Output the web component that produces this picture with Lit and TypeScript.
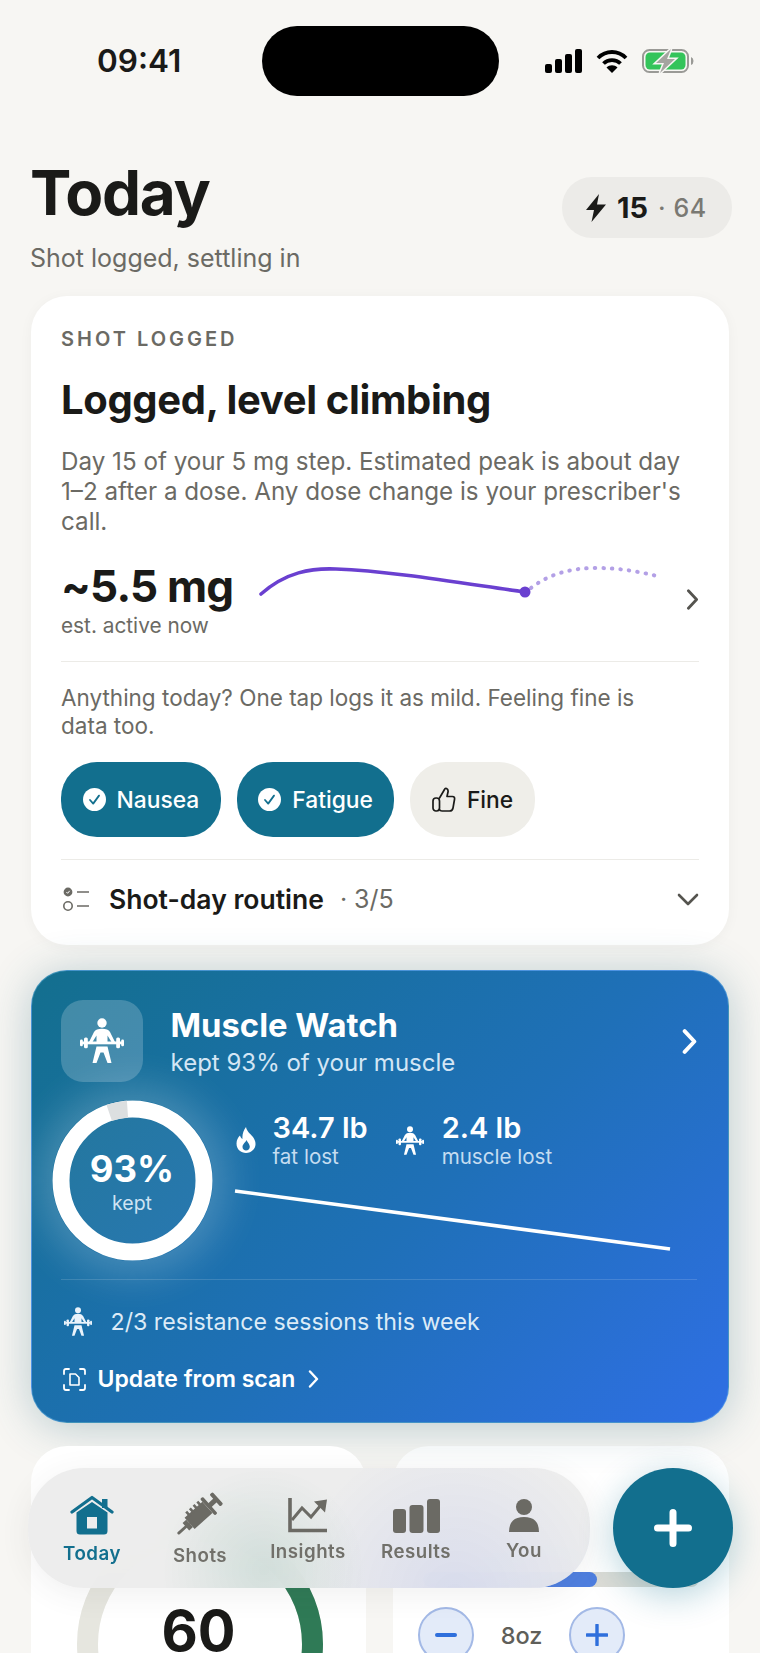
import {LitElement, html, css} from 'lit';
import {customElement} from 'lit/decorators.js';

const lifter = (w: number, c = '#fff', cls = '') => html`<svg class=${cls} width=${w} viewBox="0 0 44 46" fill=${c} stroke="none">
  <circle cx="22" cy="5" r="4.7"></circle>
  <path d="M9 24 L14 14 Q16 10.8 22 10.8 Q28 10.8 30 14 L35 24 H31.5 L27.5 17.5 V24 H16.5 V17.5 L12.5 24 Z"></path>
  <rect x="2" y="23.5" width="40" height="2.8"></rect>
  <rect x="0" y="21.5" width="2.8" height="6.8" rx="1.2"></rect>
  <rect x="4" y="19.5" width="3.8" height="10.8" rx="1.5"></rect>
  <rect x="36.2" y="19.5" width="3.8" height="10.8" rx="1.5"></rect>
  <rect x="41.2" y="21.5" width="2.8" height="6.8" rx="1.2"></rect>
  <path d="M16.5 28.6 H27.5 L31.5 45 H27.5 L23.5 34.5 H20.5 L16.5 45 H12.5Z"></path>
</svg>`;

const chevron = (w: number, h: number, c: string, sw: number) => html`<svg width=${w} height=${h} viewBox="0 0 10 18" fill="none" stroke=${c} stroke-width=${sw} stroke-linecap="round" stroke-linejoin="round"><path d="M1.5 1.5 L8.5 9 L1.5 16.5"></path></svg>`;

const check = html`<svg class="chk" width="23" height="23" viewBox="0 0 23 23"><circle cx="11.5" cy="11.5" r="11.5" fill="#fff"></circle><path d="M7 12 L10.2 15.6 L16 7.6" fill="none" stroke="#126f8e" stroke-width="1.8" stroke-linecap="round" stroke-linejoin="round"></path></svg>`;

const tabs = [
  {label: 'Today', cls: 'on', icon: html`<svg width="44" height="40" viewBox="0 0 44 40">
    <rect x="32" y="4" width="5.5" height="9" fill="#126f8e"></rect>
    <path d="M2 17 L22 2.5 L42 17" fill="none" stroke="#126f8e" stroke-width="3.2" stroke-linecap="round" stroke-linejoin="round"></path>
    <path fill-rule="evenodd" fill="#126f8e" d="M6.5 17.5 L22 7 L37.5 17.5 V36 Q37.5 39.5 34 39.5 H10 Q6.5 39.5 6.5 36Z M17 22 V33.5 H27 V22Z"></path>
  </svg>`},
  {label: 'Shots', cls: 'shots', icon: html`<svg width="46" height="44" viewBox="0 0 46 44">
    <g transform="rotate(-42 23 22)" fill="#6b6a64">
      <rect x="-7" y="20.6" width="16" height="2.8" rx="1.4"></rect>
      <path d="M4 17 H9 V27 H4Z"></path>
      <path d="M9 14.5 H33 V29.5 H9Z"></path>
      <rect x="13" y="11" width="2.6" height="6"></rect><rect x="18" y="11" width="2.6" height="6"></rect><rect x="23" y="11" width="2.6" height="6"></rect><rect x="28" y="11" width="2.6" height="6"></rect>
      <rect x="33" y="11" width="3.6" height="22" rx="1.2"></rect>
      <rect x="36" y="19.5" width="8" height="5"></rect>
      <rect x="43" y="14" width="4" height="16" rx="1.4"></rect>
    </g>
  </svg>`},
  {label: 'Insights', cls: 'ins', icon: html`<svg width="42" height="36" viewBox="0 0 42 36" fill="none" stroke="#6b6a64">
    <path d="M3 1 V33.5 H40" stroke-width="3.6"></path>
    <path d="M5 23 L15 11 L24 20 L34 8" stroke-width="3"></path>
    <path d="M27 4.5 L40 2.5 L38 15.5Z" fill="#6b6a64" stroke="none"></path>
  </svg>`},
  {label: 'Results', cls: 'res', icon: html`<svg width="47" height="34" viewBox="0 0 47 34" fill="#6b6a64">
    <rect x="0" y="10" width="13" height="24" rx="3"></rect>
    <rect x="16.5" y="6" width="14" height="28" rx="3"></rect>
    <rect x="34" y="0" width="13" height="34" rx="3"></rect>
  </svg>`},
  {label: 'You', cls: 'you', icon: html`<svg width="30" height="33" viewBox="0 0 30 33" fill="#6b6a64">
    <circle cx="15" cy="8" r="8"></circle>
    <path d="M0 33 Q0 18 15 18 Q30 18 30 33Z"></path>
  </svg>`},
];

const progress = 63;

@customElement('app-root')
export class AppRoot extends LitElement {
  static styles = css`
    :host {
      display: block;
      position: relative;
      width: 760px;
      height: 1653px;
      overflow: hidden;
      background: #f7f6f3;
      font-family: Inter, 'Liberation Sans', sans-serif;
      color: #1a1a18;
    }
    svg { display: block; flex: none; }

    .status { display: flex; align-items: center; height: 70px; padding: 26px 0 0 97px; }
    .time { width: 165px; font-size: 31.5px; font-weight: 600; line-height: 70px; }
    .island { width: 237px; height: 70px; border-radius: 35px; background: #000; }
    .sys { display: flex; align-items: center; margin-left: 46px; }
    .sys .wifi { margin-left: 14px; }
    .sys .batt { margin-left: 14px; }

    .head { display: flex; justify-content: space-between; padding: 61px 28px 0 30px; }
    h1 { margin: 0; font-size: 62px; line-height: 72px; font-weight: 700; letter-spacing: -1.3px; }
    .sub { margin-top: 14px; font-size: 25px; line-height: 30px; color: #6b6a64; }
    .badge { display: flex; align-items: center; height: 61px; width: 170px; margin-top: 20px; padding-left: 24px; box-sizing: border-box; border-radius: 30px; background: #ecebe8; font-size: 29px; font-weight: 600; }
    .badge b { margin-left: 11px; font-weight: 700; }
    .badge span { margin-left: 10px; font-size: 25px; font-weight: 500; color: #7a7973; letter-spacing: .6px; }

    .cards { padding: 23px 31px 0; }
    .card1 { height: 649px; box-sizing: border-box; padding: 31px 30px 0; border-radius: 36px; background: #fff; box-shadow: 0 2px 14px rgba(60, 60, 50, .04); }
    .eyebrow { font-size: 20px; line-height: 24px; font-weight: 600; letter-spacing: 3px; color: #6b6a64; }
    h2 { margin: 25px 0 0; font-size: 40px; line-height: 48px; font-weight: 700; letter-spacing: -.35px; }
    .para { margin-top: 23px; font-size: 24.2px; line-height: 30px; color: #6b6a64; }
    .active { display: flex; margin-top: 23px; height: 102px; border-bottom: 1px solid #ecebe7; box-sizing: border-box; }
    .val { width: 198px; flex: none; }
    .val strong { display: block; margin-top: -1px; font-size: 44px; line-height: 54px; font-weight: 700; letter-spacing: -.8px; white-space: nowrap; }
    .val small { display: block; font-size: 20.8px; line-height: 26px; color: #6b6a64; }
    .active .go { margin: 29px 0 0 21px; }
    .ask { margin-top: 22px; padding-right: 40px; font-size: 22.5px; line-height: 28px; color: #6b6a64; }
    .chips { display: flex; gap: 16px; margin-top: 22px; padding-bottom: 22px; border-bottom: 1px solid #ecebe7; }
    .chip { display: flex; align-items: center; gap: 11px; height: 75px; padding: 0 21.5px; box-sizing: border-box; border-radius: 36px; background: #126f8e; color: #fff; font-size: 22.8px; font-weight: 500; }
    .chip.off { background: #efeee9; color: #1a1a18; }
    .routine { display: flex; align-items: center; height: 78px; font-size: 26.5px; font-weight: 600; }
    .routine .txt { margin-left: 18px; }
    .routine .cnt { margin-left: 16px; font-size: 25px; font-weight: 400; color: #6b6a64; }
    .routine .down { margin-left: auto; margin-right: 0; }

    .muscle { position: relative; height: 453px; box-sizing: border-box; margin-top: 25px; padding: 29px 31px 0 28.5px; border-radius: 36px; border: 1.5px solid rgba(120, 190, 235, .45); background: linear-gradient(135deg, #136f8e 0%, #1f70b8 55%, #2f6fe4 100%); color: #fff; box-shadow: 0 4px 44px rgba(40, 100, 120, .3); }
    .mtop { display: flex; }
    .tile { display: flex; align-items: center; justify-content: center; width: 82px; height: 82px; border-radius: 22px; background: rgba(255, 255, 255, .2); }
    .mhead { margin-left: 28px; }
    .mhead h3 { margin: 0; padding-top: 5px; font-size: 32.8px; line-height: 40px; font-weight: 700; }
    .mhead p { margin: 0; padding-top: 2px; font-size: 24px; line-height: 32px; color: #d4e6f5; }
    .mtop .go { margin: 29px 0 0 auto; }
    .mid { display: flex; margin: 18px 0 0 -9px; }
    .ring { position: relative; width: 161px; height: 161px; flex: none; border-radius: 50%; box-shadow: 0 0 40px 14px rgba(255, 255, 255, .2); }
    .ring svg { position: absolute; inset: 0; }
    .ring .in { position: absolute; inset: 0; display: flex; flex-direction: column; align-items: center; justify-content: center; }
    .ring b { font-size: 36.5px; line-height: 46px; font-weight: 700; margin-top: -2px; }
    .ring span { font-size: 19.5px; line-height: 22px; color: #cfe3f3; }
    .stats { flex: 1; margin-left: 21px; padding-top: 11px; }
    .row { display: flex; }
    .stat { display: flex; align-items: flex-start; }
    .stat svg.fl { margin: 16px 17px 0 2px; }
    .stat svg.li { margin: 15px 18px 0 0; }
    .stat.two { margin-left: 28px; }
    .stat b { display: block; font-size: 29px; line-height: 34px; font-weight: 600; white-space: nowrap; }
    .stat span { display: block; font-size: 20.6px; line-height: 24px; color: #c5ddf1; white-space: nowrap; }
    .trend { margin: 20px 0 0 0; }
    .sep { height: 1px; margin-top: 18px; background: rgba(255, 255, 255, .14); }
    .sessions { display: flex; align-items: center; margin-top: 26px; font-size: 23.2px; line-height: 32px; color: #dcebf7; }
    .sessions svg { margin: 0 19px 0 3px; }
    .scan { display: flex; align-items: center; margin-top: 26px; font-size: 23px; line-height: 30px; font-weight: 600; }
    .scan svg.sc { margin: 0 12px 0 2px; }
    .scan svg.go { margin-left: 13px; }

    .lower { display: grid; grid-template-columns: 335px 336px; gap: 27px; margin-top: 23px; }
    .mini { height: 300px; box-sizing: border-box; border-radius: 36px; background: #fff; }
    .score { position: relative; padding: 75px 0 0 46px; }
    .score .num { position: absolute; left: 0; right: 0; top: 152px; text-align: center; font-size: 56px; line-height: 66px; font-weight: 700; }
    .water { padding: 126px 30px 0; }
    .track { height: 15px; border-radius: 8px; background: #dcdcd6; overflow: hidden; }
    .fill { height: 100%; border-radius: 8px; background: #4f7fe0; }
    .amt { display: flex; align-items: center; margin: 20px 0 0 -5px; }
    .amt .b { display: flex; align-items: center; justify-content: center; width: 56px; height: 56px; box-sizing: border-box; border-radius: 50%; border: 2px solid #a3b9e6; background: #e3ebf9; }
    .amt .oz { width: 95px; text-align: center; font-size: 23.5px; font-weight: 500; color: #5f5f5a; }

    .nav { position: absolute; left: 28px; top: 1468px; display: flex; width: 562px; height: 120px; box-sizing: border-box; padding-left: 10px; border-radius: 56px; background: radial-gradient(circle at 42% 85%, rgba(206, 220, 216, .85), rgba(206, 220, 216, 0) 30%), radial-gradient(circle at 76% 105%, rgba(212, 216, 236, .8), rgba(212, 216, 236, 0) 36%), rgba(236, 236, 236, .93); backdrop-filter: blur(30px); box-shadow: 0 6px 30px rgba(60, 70, 70, .08); }
    .tab { display: flex; flex-direction: column; align-items: center; width: 108px; height: 120px; box-sizing: border-box; font-size: 18.7px; line-height: 24px; font-weight: 600; letter-spacing: .5px; color: #71706a; }
    .tab svg { flex: none; }
    .tab .ic { display: flex; align-items: flex-end; justify-content: center; height: 36px; margin-bottom: 7px; }
    .tab.on { padding-top: 27px; color: #126f8e; }
    .tab.shots { padding-top: 24px; }
    .tab.shots .ic { height: 44px; margin-bottom: 8px; }
    .tab.ins { padding-top: 29px; }
    .tab.res { padding-top: 29px; }
    .tab.you { padding-top: 28px; }
    .tab.on .ic { height: 40px; margin-bottom: 7px; }
    .fab { position: absolute; left: 613px; top: 1468px; display: flex; align-items: center; justify-content: center; width: 120px; height: 120px; border-radius: 50%; background: #126f8e; box-shadow: 0 8px 34px rgba(18, 111, 142, .3); }
  `;

  render() {
    return html`
      <div class="status">
        <div class="time">09:41</div>
        <div class="island"></div>
        <div class="sys">
          <svg width="37" height="24" viewBox="0 0 37 24" fill="#000"><rect x="0" y="15" width="7" height="9" rx="2"></rect><rect x="10" y="10" width="7" height="14" rx="2"></rect><rect x="20" y="5" width="7" height="19" rx="2"></rect><rect x="30" y="0" width="7" height="24" rx="2"></rect></svg>
          <svg class="wifi" width="32" height="24" viewBox="0 0 32 24" fill="none" stroke="#000" stroke-width="3.8"><path d="M2 9 C10 1 22 1 30 9"></path><path d="M7.5 14.5 C12 10 20 10 24.5 14.5"></path><path d="M16 24 L10.5 18.5 C13.5 15.5 18.5 15.5 21.5 18.5 Z" fill="#000" stroke="none"></path></svg>
          <svg class="batt" width="52" height="24" viewBox="0 0 52 24"><rect x="1" y="1" width="45" height="22" rx="6.5" fill="none" stroke="#9a9a96" stroke-width="2"></rect><rect x="3.5" y="3.5" width="40" height="17" rx="4.5" fill="#34c45a"></rect><path d="M49 8 Q51.5 9 51.5 12 Q51.5 15 49 16Z" fill="#9a9a96"></path><path d="M29 0 L14 14 H22 L18 24 L33 10 H25Z" fill="#a4a4a0" stroke="#f7f6f3" stroke-width="3" paint-order="stroke"></path></svg>
        </div>
      </div>

      <div class="head">
        <div>
          <h1>Today</h1>
          <div class="sub">Shot logged, settling in</div>
        </div>
        <div class="badge">
          <svg width="20" height="28" viewBox="0 0 20 28" fill="#1a1a18"><path d="M13 0 L0 16 H8 L5.5 28 L20 10.5 H11Z"></path></svg>
          <b>15</b><span>· 64</span>
        </div>
      </div>

      <div class="cards">
        <div class="card1">
          <div class="eyebrow">SHOT LOGGED</div>
          <h2>Logged, level climbing</h2>
          <div class="para">Day 15 of your 5 mg step. Estimated peak is about day 1–2 after a dose. Any dose change is your prescriber's call.</div>
          <div class="active">
            <div class="val"><strong>~5.5 mg</strong><small>est. active now</small></div>
            <svg width="406" height="44" viewBox="258 560 406 44" fill="none">
              <path d="M260 594 C285 572 310 568 335 569 C390 571 460 583 524 592" stroke="#6a40d0" stroke-width="3.6" stroke-linecap="round"></path>
              <path d="M530 588 C548 574 570 568 595 568 C620 568 640 572 660 577" stroke="#b3a0e6" stroke-width="4" stroke-linecap="round" stroke-dasharray="0.5 8"></path>
              <circle cx="524" cy="592" r="5.5" fill="#6a40d0"></circle>
            </svg>
            <div class="go">${chevron(13, 21, '#55544f', 2.4)}</div>
          </div>
          <div class="ask">Anything today? One tap logs it as mild. Feeling fine is data too.</div>
          <div class="chips">
            <div class="chip">${check}Nausea</div>
            <div class="chip">${check}Fatigue</div>
            <div class="chip off">
              <svg width="24" height="25" viewBox="0 0 24 25" fill="none" stroke="#1a1a18" stroke-width="1.7" stroke-linejoin="round" stroke-linecap="round"><path d="M7.5 11 L12.5 2.5 Q13 1 14.5 1.5 Q16.5 2.5 16 5 L15 9.5 H20.5 Q23 9.5 22.5 12.5 L21 21 Q20.5 24 17.5 24 H10 Q8 24 7.5 22.5"></path><rect x="1" y="11" width="6.5" height="13" rx="3"></rect></svg>
              Fine
            </div>
          </div>
          <div class="routine">
            <svg width="30" height="24" viewBox="0 0 30 24" fill="none" stroke="#6b6a64" stroke-width="1.6"><circle cx="7" cy="5" r="3.6" fill="#6b6a64"></circle><path d="M5.4 5 L6.6 6.3 L8.7 3.8" stroke="#fff" stroke-width="1"></path><circle cx="7" cy="19" r="4.2"></circle><path d="M16 5 H28 M16 19 H28"></path></svg>
            <span class="txt">Shot-day routine</span><span class="cnt">· 3/5</span>
            <svg class="down" width="22" height="13" viewBox="0 0 22 13" fill="none" stroke="#55544f" stroke-width="2.6" stroke-linecap="round" stroke-linejoin="round"><path d="M2 2 L11 11 L20 2"></path></svg>
          </div>
        </div>

        <div class="muscle">
          <div class="mtop">
            <div class="tile">${lifter(44)}</div>
            <div class="mhead">
              <h3>Muscle Watch</h3>
              <p>kept 93% of your muscle</p>
            </div>
            <div class="go">${chevron(15, 25, '#fff', 2.8)}</div>
          </div>
          <div class="mid">
            <div class="ring">
              <svg width="161" height="161" viewBox="0 0 161 161">
                <circle cx="80.5" cy="80.5" r="63" fill="rgba(255,255,255,.06)"></circle>
                <circle cx="80.5" cy="80.5" r="71.5" fill="none" stroke="#fff" stroke-width="17"></circle>
                <path d="M57.2 12.9 A71.5 71.5 0 0 1 75.5 9.2" fill="none" stroke="#dcdfe0" stroke-width="17"></path>
              </svg>
              <div class="in"><b>93%</b><span>kept</span></div>
            </div>
            <div class="stats">
              <div class="row">
                <div class="stat">
                  <svg class="fl" width="20" height="26" viewBox="0 0 20 26"><path fill-rule="evenodd" fill="#fff" d="M10 0 C11 5 14 6 17 10 C20 14 20.5 19 17.5 22.5 C15.5 25 12.5 26 10 26 C5 26 0.5 22.5 0.5 16.5 C0.5 13 2 10.5 4 8.5 C4.5 10.5 5.5 11.5 6.5 12 C6 7.5 7.5 3 10 0Z M10.5 13 C9.5 15.5 6.5 17 6.5 20 C6.5 22.3 8.3 23.5 10 23.5 C12 23.5 13.8 22 13.8 19.8 C13.8 17 11.5 15.5 10.5 13Z"></path></svg>
                  <div><b>34.7 lb</b><span>fat lost</span></div>
                </div>
                <div class="stat two">
                  ${lifter(28, '#fff', 'li')}
                  <div><b>2.4 lb</b><span>muscle lost</span></div>
                </div>
              </div>
              <svg class="trend" width="440" height="64" viewBox="0 0 440 64"><path d="M1 2 L436 60" stroke="#fff" stroke-width="3.6" fill="none"></path></svg>
            </div>
          </div>
          <div class="sep"></div>
          <div class="sessions">${lifter(28, '#eaf3fb')}2/3 resistance sessions this week</div>
          <div class="scan">
            <svg class="sc" width="23" height="23" viewBox="0 0 23 23" fill="none" stroke="#fff" stroke-width="1.8" stroke-linecap="round"><path d="M1 6 V3 Q1 1 3 1 H6 M17 1 H20 Q22 1 22 3 V6 M22 17 V20 Q22 22 20 22 H17 M6 22 H3 Q1 22 1 20 V17"></path><path d="M7 6 H12.5 L16 9.5 V17 H7Z" stroke-width="1.6" stroke-linejoin="round"></path></svg>
            Update from scan
            <svg class="go" width="11" height="18" viewBox="0 0 10 18" fill="none" stroke="#fff" stroke-width="2.4" stroke-linecap="round" stroke-linejoin="round"><path d="M1.5 1.5 L8.5 9 L1.5 16.5"></path></svg>
          </div>
        </div>

        <div class="lower">
          <div class="mini score">
            <svg width="246" height="246" viewBox="0 0 246 246" fill="none">
              <circle cx="123" cy="123" r="112.5" stroke="#e6e6df" stroke-width="21"></circle>
              <circle cx="123" cy="123" r="112.5" stroke="#2f7a56" stroke-width="21" pathLength="100" stroke-dasharray="60 40" transform="rotate(-90 123 123)"></circle>
            </svg>
            <div class="num">60</div>
          </div>
          <div class="mini water">
            <div class="track"><div class="fill" style="width:${progress}%"></div></div>
            <div class="amt">
              <div class="b"><svg width="22" height="4" viewBox="0 0 22 4"><rect width="22" height="4" rx="2" fill="#2f6fdc"></rect></svg></div>
              <div class="oz">8oz</div>
              <div class="b"><svg width="22" height="22" viewBox="0 0 22 22"><path d="M11 1 V21 M1 11 H21" stroke="#2f6fdc" stroke-width="3.4" stroke-linecap="round"></path></svg></div>
            </div>
          </div>
        </div>
      </div>

      <div class="nav">
        ${tabs.map(t => html`<div class="tab ${t.cls}"><div class="ic">${t.icon}</div>${t.label}</div>`)}
      </div>
      <div class="fab">
        <svg width="38" height="38" viewBox="0 0 38 38"><path d="M19 3.5 V34.5 M3.5 19 H34.5" stroke="#fff" stroke-width="7" stroke-linecap="round"></path></svg>
      </div>
    `;
  }
}
